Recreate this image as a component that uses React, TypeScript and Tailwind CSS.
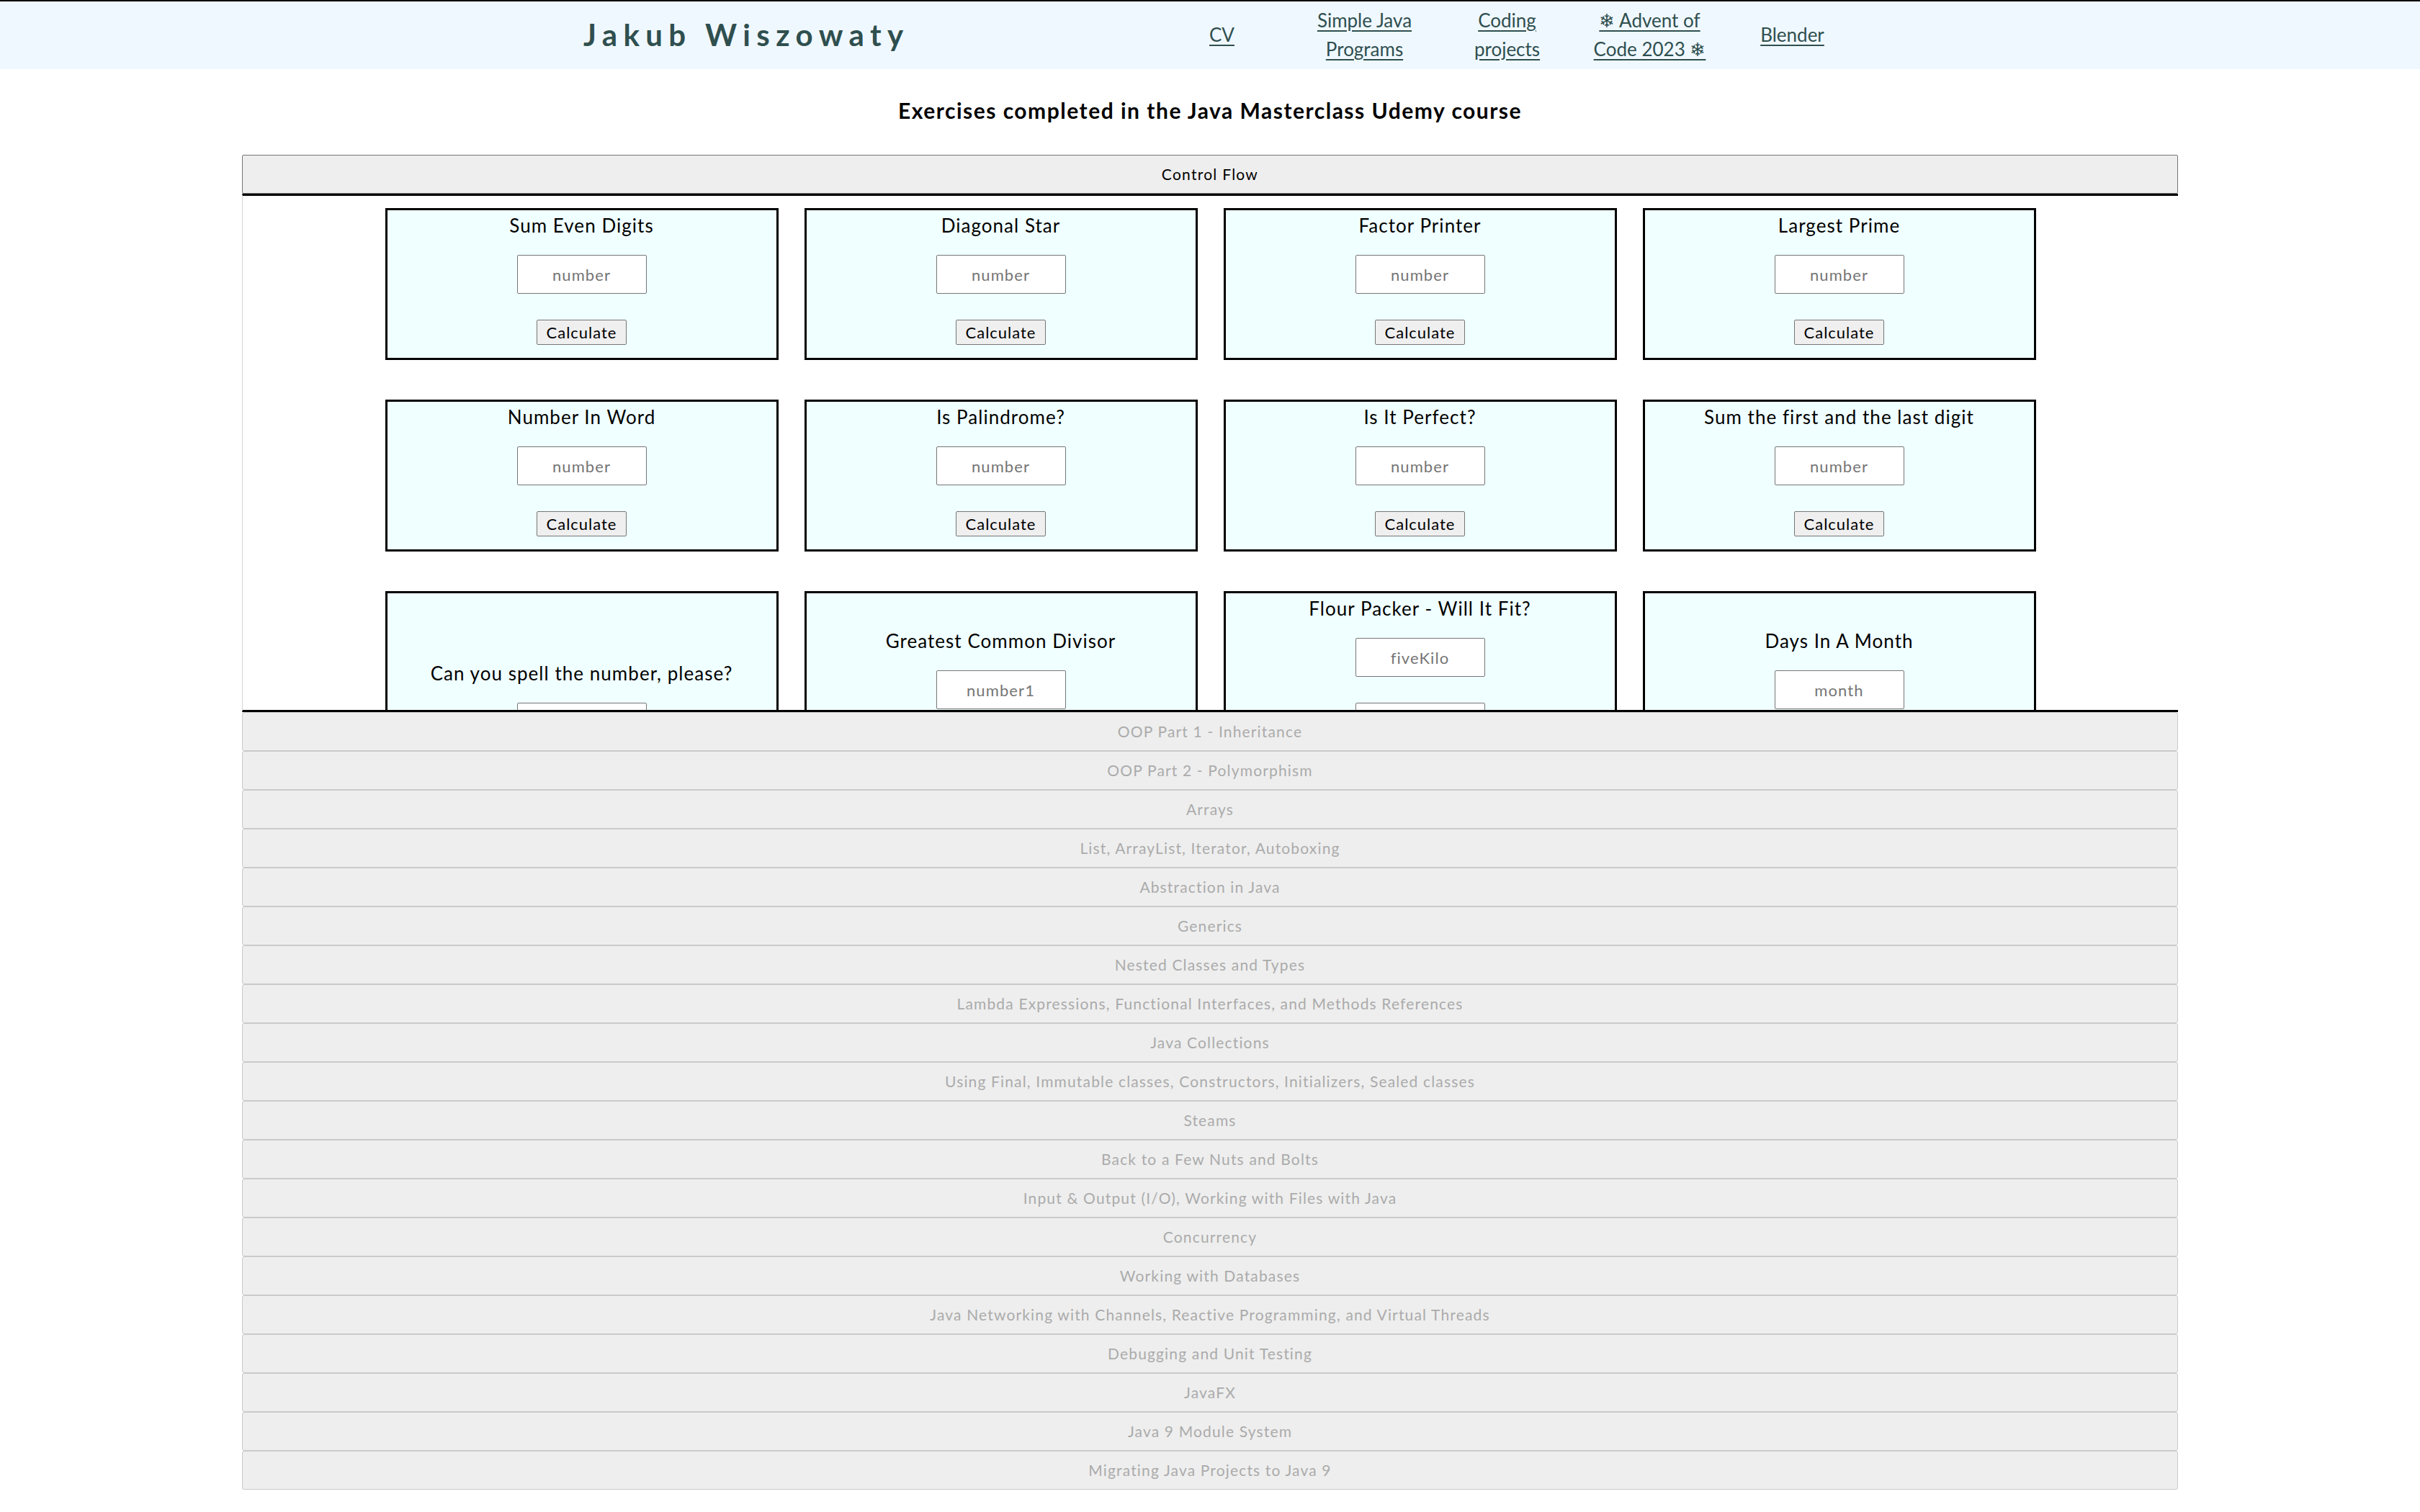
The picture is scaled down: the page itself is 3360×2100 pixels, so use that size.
import React from "react";

type Card = { title: string; inputs: string[] };

const cards: Card[] = [
  { title: "Sum Even Digits", inputs: ["number"] },
  { title: "Diagonal Star", inputs: ["number"] },
  { title: "Factor Printer", inputs: ["number"] },
  { title: "Largest Prime", inputs: ["number"] },
  { title: "Number In Word", inputs: ["number"] },
  { title: "Is Palindrome?", inputs: ["number"] },
  { title: "Is It Perfect?", inputs: ["number"] },
  { title: "Sum the first and the last digit", inputs: ["number"] },
  { title: "Can you spell the number, please?", inputs: ["number"] },
  { title: "Greatest Common Divisor", inputs: ["number1", "number2"] },
  { title: "Flour Packer - Will It Fit?", inputs: ["fiveKilo", "oneKilo", "goal"] },
  { title: "Days In A Month", inputs: ["month", "year"] },
];

const sections = [
  "OOP Part 1 - Inheritance",
  "OOP Part 2 - Polymorphism",
  "Arrays",
  "List, ArrayList, Iterator, Autoboxing",
  "Abstraction in Java",
  "Generics",
  "Nested Classes and Types",
  "Lambda Expressions, Functional Interfaces, and Methods References",
  "Java Collections",
  "Using Final, Immutable classes, Constructors, Initializers, Sealed classes",
  "Steams",
  "Back to a Few Nuts and Bolts",
  "Input & Output (I/O), Working with Files with Java",
  "Concurrency",
  "Working with Databases",
  "Java Networking with Channels, Reactive Programming, and Virtual Threads",
  "Debugging and Unit Testing",
  "JavaFX",
  "Java 9 Module System",
  "Migrating Java Projects to Java 9",
];

const navItems = ["CV", "Simple Java Programs", "Coding projects", "❄ Advent of Code 2023 ❄", "Blender"];

function ExerciseCard({ card }: { card: Card }) {
  return (
    <div className="flex flex-col items-center justify-center border-[3px] border-black bg-[#f0ffff] pt-[6px] pb-[18px]">
      <h3 className="mb-[25px] text-center text-[26px] leading-[31px] tracking-[0.04em] text-black">{card.title}</h3>
      {card.inputs.map((p) => (
        <input
          key={p}
          placeholder={p}
          className="mb-[36px] h-[54px] w-[180px] rounded-[2px] border border-[#767676] bg-white text-center text-[22px] tracking-[0.05em] text-black placeholder:text-[#757575]"
        />
      ))}
      <button className="h-[35px] rounded-[2px] border border-[#767676] bg-[#efefef] px-[13px] text-[22px] leading-[26px] tracking-[0.045em] text-black">
        Calculate
      </button>
    </div>
  );
}

export default function App() {
  return (
    <div className="min-h-screen bg-white font-['Lato',sans-serif] text-black">
      <header className="h-[96px] border-t-2 border-black bg-[#f0f8ff]">
        <div className="mx-auto flex h-full w-[1782px] items-center justify-between pb-[3px]">
          <h1 className="pl-[21px] text-[42px] font-bold leading-[50px] tracking-[0.2em] text-[#2f4f4f]">
            Jakub Wiszowaty
          </h1>
          <nav className="flex items-center gap-[33px]">
            {navItems.map((n) => (
              <a
                key={n}
                href="#"
                className="w-[165px] text-center text-[26px] leading-[40px] text-[#2f4f4f] underline underline-offset-[4px]"
              >
                {n}
              </a>
            ))}
          </nav>
        </div>
      </header>

      <h2 className="mt-[39px] mb-[44px] text-center text-[30px] font-bold leading-[36px] tracking-[0.05em]">
        Exercises completed in the Java Masterclass Udemy course
      </h2>

      <div className="mx-auto w-[80%]">
        <button className="h-[54px] w-full rounded-[2px] border border-[#767676] bg-[#eeeeee] text-[21px] tracking-[0.06em] text-black">
          Control Flow
        </button>
        <div className="h-[720px] overflow-hidden border-t-[3px] border-b-[3px] border-l border-t-black border-b-black border-l-[#d6d6d6] pt-[17px]">
          <div className="grid grid-cols-[repeat(4,546px)] justify-center gap-x-[36px] gap-y-[55px]">
            {cards.map((c) => (
              <ExerciseCard key={c.title} card={c} />
            ))}
          </div>
        </div>
        <div className="flex flex-col">
          {sections.map((s) => (
            <button
              key={s}
              className="h-[54px] w-full rounded-[3px] border border-[#cacaca] bg-[#eeeeee] text-[21px] tracking-[0.055em] text-[#ababab]"
            >
              {s}
            </button>
          ))}
        </div>
      </div>
    </div>
  );
}
